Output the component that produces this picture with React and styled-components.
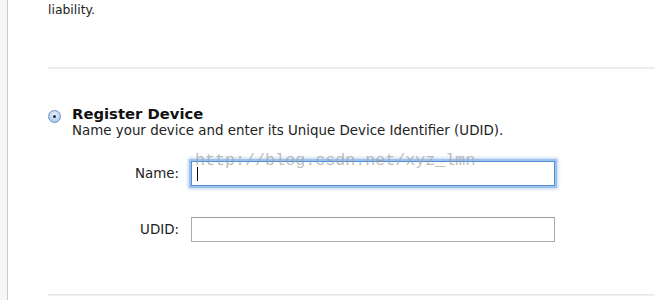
import React from 'react'
import styled, { createGlobalStyle } from 'styled-components'

const GlobalStyle = createGlobalStyle`
  html, body {
    margin: 0;
    padding: 0;
    background: #ffffff;
  }
  body {
    font-family: "DejaVu Sans", "Liberation Sans", sans-serif;
    color: #111;
  }
`

const Page = styled.div`
  display: flex;
  width: 655px;
  height: 300px;
  overflow: hidden;
`

const SideStrip = styled.div`
  width: 7px;
  flex: none;
  background: #f5f6f5;
  border-right: 1px solid #c9c9c9;
`

const Content = styled.div`
  flex: 1;
  padding-left: 40px;
  display: flex;
  flex-direction: column;
`

const Tail = styled.p`
  margin: 0;
  padding-top: 3px;
  font-size: 12.4px;
  line-height: 14px;
  color: #222;
`

const Divider = styled.div`
  height: 2px;
  margin-top: ${(p) => p.$top}px;
  background: linear-gradient(to bottom, #e6e6e6, #f4f4f4);
`

const Option = styled.div`
  display: flex;
  gap: 11px;
  margin-top: 37px;
`

const Radio = styled.span`
  flex: none;
  width: 11px;
  height: 11px;
  margin-top: 4px;
  border-radius: 50%;
  border: 1px solid #6f8fbf;
  background: radial-gradient(circle at 50% 35%, #eaf2fc 0%, #b6cdeb 70%, #8fb0de 100%);
  display: flex;
  align-items: center;
  justify-content: center;
  &::after {
    content: '';
    width: 3px;
    height: 3px;
    border-radius: 50%;
    background: #1d2a44;
  }
`

const OptionText = styled.div`
  display: flex;
  flex-direction: column;
`

const Title = styled.div`
  font-size: 14.8px;
  font-weight: bold;
  line-height: 17px;
  margin-top: -1px;
`

const Desc = styled.div`
  font-size: 13.4px;
  line-height: 17px;
  color: #222;
`

const Form = styled.div`
  display: grid;
  grid-template-columns: 131px 364px;
  column-gap: 12px;
  row-gap: 31px;
  align-items: center;
  margin-top: 22px;
  position: relative;
`

const Label = styled.label`
  font-size: 13.4px;
  color: #222;
  text-align: right;
`

const Field = styled.div`
  height: 25px;
  box-sizing: border-box;
  background: #fff;
  border: 1px solid ${(p) => (p.$focused ? '#4f8fd6' : '#ababab')};
  border-top-color: ${(p) => (p.$focused ? '#4f8fd6' : '#9c9c9c')};
  box-shadow: ${(p) =>
    p.$focused ? '0 0 0 2px #9cc3ee, 0 0 3px 3px rgba(110,160,225,0.45)' : 'none'};
  display: flex;
  align-items: center;
  padding-left: 5px;
`

const Caret = styled.span`
  width: 1px;
  height: 14px;
  background: #000;
`

const Watermark = styled.span`
  position: absolute;
  left: 147px;
  top: -10px;
  font-family: "Liberation Mono", "DejaVu Sans Mono", monospace;
  font-size: 16.7px;
  color: rgba(160, 160, 160, 0.7);
  pointer-events: none;
`

export default function App() {
  return (
    <Page>
      <GlobalStyle />
      <SideStrip />
      <Content>
        <Tail>liability.</Tail>
        <Divider $top={50} />
        <Option>
          <Radio />
          <OptionText>
            <Title>Register Device</Title>
            <Desc>Name your device and enter its Unique Device Identifier (UDID).</Desc>
          </OptionText>
        </Option>
        <Form>
          <Watermark>http://blog.csdn.net/xyz_lmn</Watermark>
          <Label>Name:</Label>
          <Field $focused>
            <Caret />
          </Field>
          <Label>UDID:</Label>
          <Field />
        </Form>
        <Divider $top={52} />
      </Content>
    </Page>
  )
}
